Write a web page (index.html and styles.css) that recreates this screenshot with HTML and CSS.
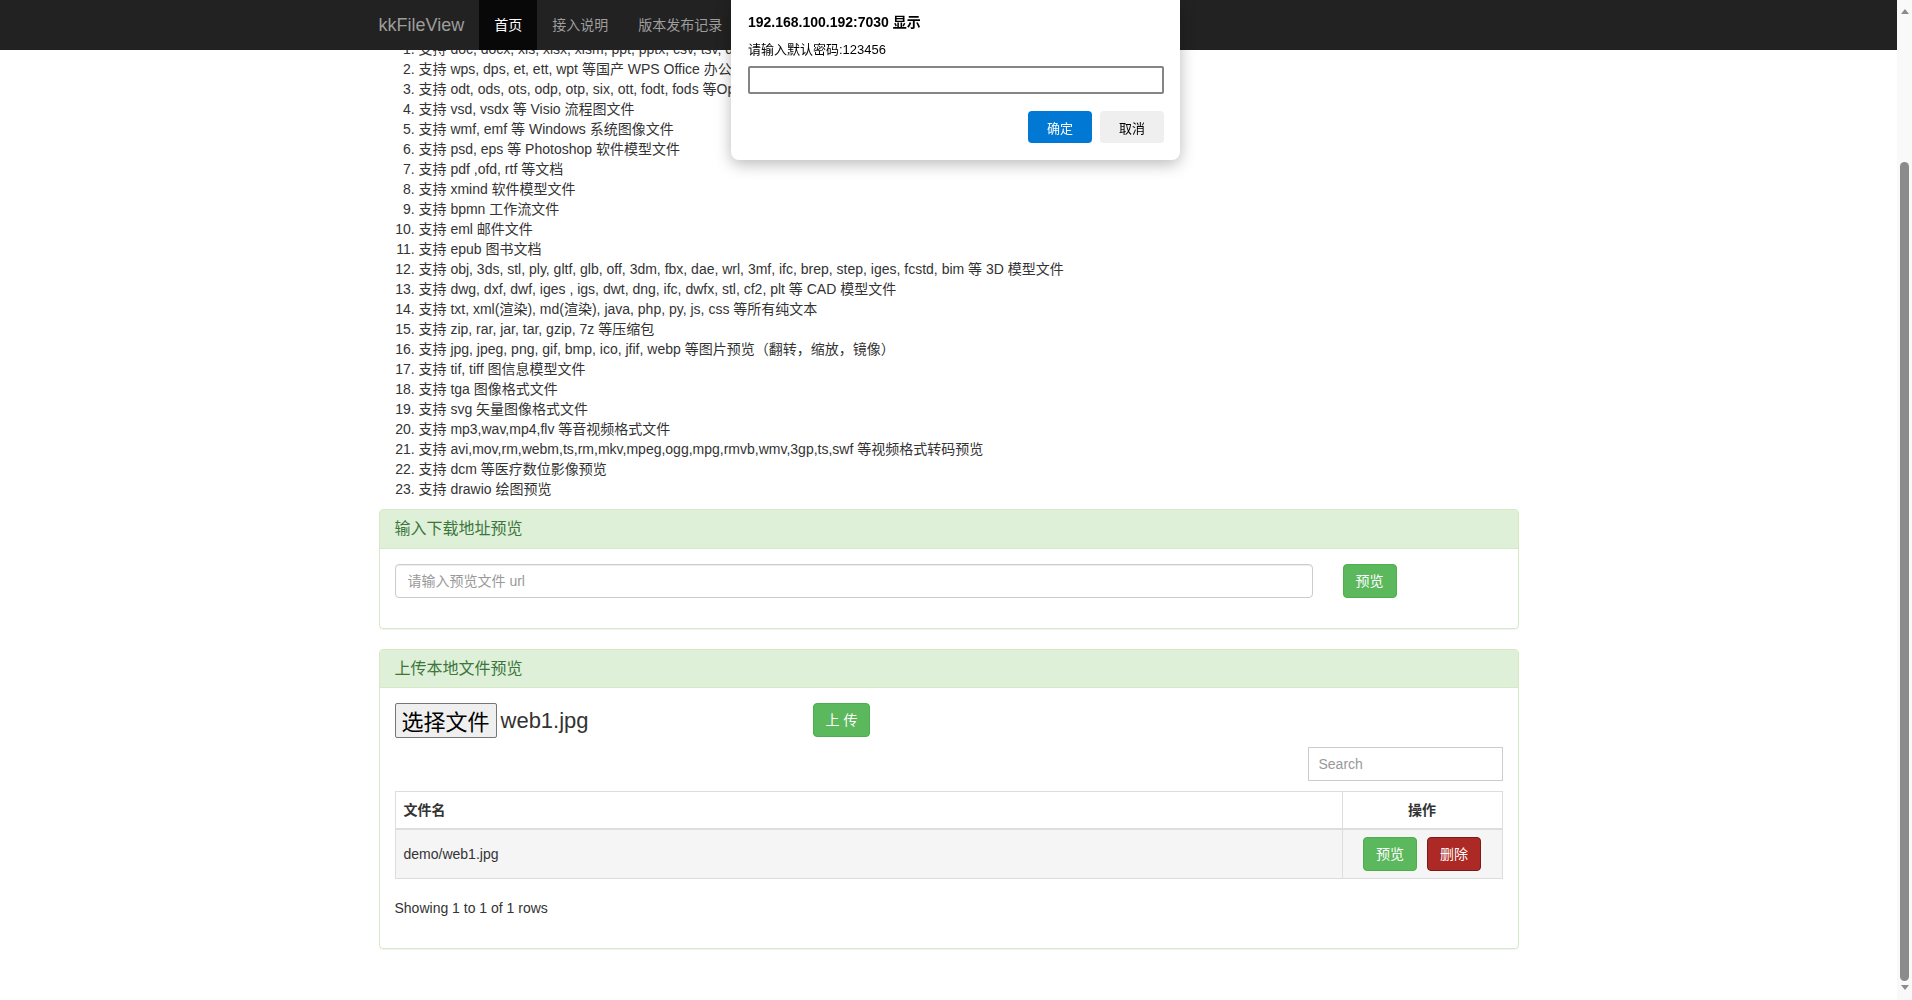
FILE: index.html
```html
<!DOCTYPE html>
<html lang="zh-CN">
<head>
  <meta charset="UTF-8" />
  <meta name="viewport" content="width=device-width, initial-scale=1.0"/>
  <title>kkFileView演示首页</title>
  <link rel="stylesheet" href="styles.css">
</head>
<body>
  <nav class="navbar">
    <div class="navbar-inner">
      <a class="brand" href="#">kkFileView</a>
      <ul class="nav">
        <li class="active"><a href="#">首页</a></li>
        <li><a href="#">接入说明</a></li>
        <li><a href="#">版本发布记录</a></li>
      </ul>
    </div>
  </nav>

  <div class="container">
    <ol class="types">
      <li>支持 doc, docx, xls, xlsx, xlsm, ppt, pptx, csv, tsv, dotm, xlt, xltm, dot, dotx, xlam, xla, pages 等 Office 办公文档</li>
      <li>支持 wps, dps, et, ett, wpt 等国产 WPS Office 办公文档</li>
      <li>支持 odt, ods, ots, odp, otp, six, ott, fodt, fods 等OpenOffice、LibreOffice 办公文档</li>
      <li>支持 vsd, vsdx 等 Visio 流程图文件</li>
      <li>支持 wmf, emf 等 Windows 系统图像文件</li>
      <li>支持 psd, eps 等 Photoshop 软件模型文件</li>
      <li>支持 pdf ,ofd, rtf 等文档</li>
      <li>支持 xmind 软件模型文件</li>
      <li>支持 bpmn 工作流文件</li>
      <li>支持 eml 邮件文件</li>
      <li>支持 epub 图书文档</li>
      <li>支持 obj, 3ds, stl, ply, gltf, glb, off, 3dm, fbx, dae, wrl, 3mf, ifc, brep, step, iges, fcstd, bim 等 3D 模型文件</li>
      <li>支持 dwg, dxf, dwf, iges , igs, dwt, dng, ifc, dwfx, stl, cf2, plt 等 CAD 模型文件</li>
      <li>支持 txt, xml(渲染), md(渲染), java, php, py, js, css 等所有纯文本</li>
      <li>支持 zip, rar, jar, tar, gzip, 7z 等压缩包</li>
      <li>支持 jpg, jpeg, png, gif, bmp, ico, jfif, webp 等图片预览（翻转，缩放，镜像）</li>
      <li>支持 tif, tiff 图信息模型文件</li>
      <li>支持 tga 图像格式文件</li>
      <li>支持 svg 矢量图像格式文件</li>
      <li>支持 mp3,wav,mp4,flv 等音视频格式文件</li>
      <li>支持 avi,mov,rm,webm,ts,rm,mkv,mpeg,ogg,mpg,rmvb,wmv,3gp,ts,swf 等视频格式转码预览</li>
      <li>支持 dcm 等医疗数位影像预览</li>
      <li>支持 drawio 绘图预览</li>
    </ol>

    <div class="panel">
      <div class="panel-heading">
        <h3 class="panel-title">输入下载地址预览</h3>
      </div>
      <div class="panel-body">
        <div class="url-row">
          <input class="form-control url-input" type="text" placeholder="请输入预览文件 url">
          <button class="btn btn-success">预览</button>
        </div>
      </div>
    </div>

    <div class="panel">
      <div class="panel-heading">
        <h3 class="panel-title">上传本地文件预览</h3>
      </div>
      <div class="panel-body">
        <div class="upload-row">
          <div class="file-picker">
            <button class="file-btn">选择文件</button>
            <span class="file-name">web1.jpg</span>
          </div>
          <button class="btn btn-success">上 传</button>
        </div>

        <div class="toolbar">
          <input class="search" type="text" placeholder="Search">
        </div>

        <table class="file-table">
          <thead>
            <tr>
              <th>文件名</th>
              <th class="op-col">操作</th>
            </tr>
          </thead>
          <tbody>
            <tr>
              <td>demo/web1.jpg</td>
              <td class="op-col">
                <button class="btn btn-success">预览</button>
                <button class="btn btn-danger">删除</button>
              </td>
            </tr>
          </tbody>
        </table>

        <div class="pagination-info">Showing 1 to 1 of 1 rows</div>
      </div>
    </div>
  </div>

  <div class="dialog">
    <div class="dialog-title">192.168.100.192:7030 显示</div>
    <div class="dialog-msg">请输入默认密码:123456</div>
    <input class="dialog-input" type="text">
    <div class="dialog-actions">
      <button class="dlg-btn dlg-ok">确定</button>
      <button class="dlg-btn dlg-cancel">取消</button>
    </div>
  </div>

  <!-- window scrollbar, scrolled to the bottom -->
  <div class="scrollbar">
    <span class="sb-arrow sb-up"></span>
    <span class="sb-thumb"></span>
    <span class="sb-arrow sb-down"></span>
  </div>
</body>
</html>
```

FILE: styles.css
```css
html, body { height: 1000px; overflow: hidden; }
body { margin: 0; padding: 39px 15px 0 0; box-sizing: border-box; font-family: "Liberation Sans", Arial, "Noto Sans CJK SC", sans-serif; font-size: 14px; line-height: 20px; color: #333; background: #fff; }

/* navbar */
.navbar { position: fixed; top: 0; left: 0; right: 15px; height: 50px; background: #222; z-index: 10; }
.navbar-inner { width: 1170px; margin: 0 auto; display: flex; }
.brand { display: block; padding: 15px; font-size: 18px; line-height: 20px; color: #9d9d9d; text-decoration: none; }
.nav { display: flex; list-style: none; margin: 0; padding: 0; }
.nav a { display: block; padding: 15px; line-height: 20px; color: #9d9d9d; text-decoration: none; }
.nav .active a { background: #080808; color: #fff; }

.container { width: 1140px; margin: 0 auto; padding: 0 15px; }

.types { margin: 0 0 10px; padding-left: 40px; }

/* panels */
.panel { border: 1px solid #d6e9c6; border-radius: 4px; margin-bottom: 20px; box-shadow: 0 1px 1px rgba(0,0,0,0.05); }
.panel-heading { background: #dff0d8; color: #3c763d; padding: 10px 15px; border-bottom: 1px solid #d6e9c6; border-radius: 3px 3px 0 0; }
.panel-title { margin: 0; font-size: 16px; line-height: 17.6px; font-weight: 400; }
.panel-body { padding: 15px; }

.form-control { height: 34px; box-sizing: border-box; padding: 6px 12px; font-family: inherit; font-size: 14px; color: #555; border: 1px solid #ccc; border-radius: 4px; box-shadow: inset 0 1px 1px rgba(0,0,0,0.075); }
.form-control::placeholder, .search::placeholder { color: #999; }

.url-row { display: flex; gap: 30px; margin-bottom: 15px; }
.url-input { width: 918px; }

.btn { height: 34px; padding: 6px 12px; font-family: inherit; font-size: 14px; line-height: 20px; color: #fff; border: 1px solid transparent; border-radius: 4px; cursor: pointer; }
.btn-success { background: #5cb85c; border-color: #4cae4c; }
.btn-danger { background: #ac2925; border-color: #761c19; }

/* upload */
.upload-row { display: flex; align-items: flex-start; }
.file-picker { width: 418px; display: flex; align-items: center; }
.file-btn { height: 35px; padding: 0 6px; font-family: "Noto Sans CJK SC", sans-serif; font-size: 22px; line-height: 33px; color: #000; background: #efefef; border: 1px solid #767676; border-radius: 2px; }
.file-name { margin-left: 4px; font-size: 22px; color: #333; }

.toolbar { display: flex; justify-content: flex-end; margin: 9px 0 10px; }
.search { width: 195px; height: 34px; box-sizing: border-box; padding: 6px 10px; font-family: inherit; font-size: 14px; border: 1px solid #ccc; border-radius: 0; }

.file-table { width: 100%; border-collapse: collapse; border: 1px solid #ddd; }
.file-table th { padding: 8px; text-align: left; font-weight: bold; border: 1px solid #ddd; border-bottom: 2px solid #ddd; }
.file-table td { padding: 7px 8px; border: 1px solid #ddd; background: #f5f5f5; }
.file-table .op-col { width: 143px; text-align: center; }
.file-table td.op-col .btn { margin: 0 3px; }

.pagination-info { margin: 12px 0 8px; line-height: 34px; }

/* browser prompt dialog */
.dialog { position: fixed; left: 731px; top: 0; width: 449px; height: 160px; box-sizing: border-box; padding: 13px 16px 0 17px; background: #fff; border-radius: 0 0 8px 8px; box-shadow: 0 4px 16px rgba(0,0,0,0.28); z-index: 20; font-family: "Liberation Sans", Arial, "Noto Sans CJK SC", sans-serif; color: #000; }
.dialog-title { font-size: 14px; line-height: 18px; font-weight: bold; }
.dialog-msg { margin-top: 10px; font-size: 13px; line-height: 18px; }
.dialog-input { display: block; width: 100%; height: 28px; box-sizing: border-box; margin-top: 7px; border: 2px solid #858585; border-radius: 2px; }
.dialog-actions { display: flex; justify-content: flex-end; gap: 8px; margin-top: 17px; }
.dlg-btn { width: 64px; height: 32px; font-family: inherit; font-size: 13px; border: none; border-radius: 4px; }
.dlg-ok { background: #0078d4; color: #fff; }
.dlg-cancel { background: #efefef; color: #000; }

/* fake window scrollbar */
.scrollbar { position: fixed; top: 0; right: 0; width: 15px; height: 1000px; background: #f9f9f9; display: flex; flex-direction: column; align-items: center; }
.sb-arrow { width: 0; height: 0; border-left: 4px solid transparent; border-right: 4px solid transparent; }
.sb-up { margin-top: 9px; border-bottom: 5px solid #8b8b8b; }
.sb-thumb { width: 9px; height: 819px; margin-top: 148px; background: #8b8b8b; border-radius: 5px; }
.sb-down { margin-top: 4px; border-top: 5px solid #8b8b8b; }
```
